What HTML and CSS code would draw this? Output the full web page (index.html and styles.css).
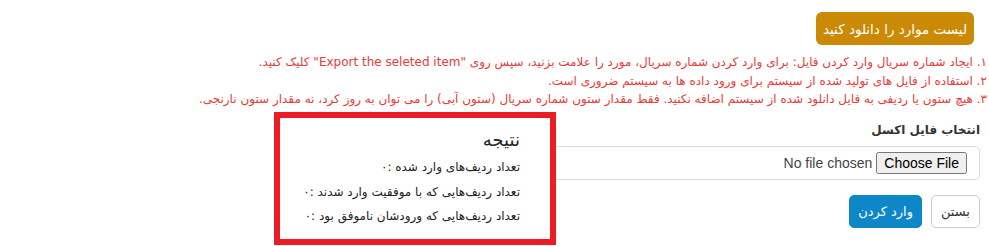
FILE: index.html
```html
<!DOCTYPE html>
<html lang="fa" dir="rtl">
<head>
    <meta charset="UTF-8">
    <meta name="viewport" content="width=device-width, initial-scale=1.0">
    <title>وارد کردن فایل اکسل</title>
    <link rel="stylesheet" href="styles.css">
</head>
<body>
    <div class="page">
        <div class="download-row">
            <button class="btn-download">لیست موارد را دانلود کنید</button>
        </div>

        <ul class="notes">
            <li>۱. ایجاد شماره سریال وارد کردن فایل: برای وارد کردن شماره سریال، مورد را علامت بزنید، سپس روی "Export the seleted item" کلیک کنید.</li>
            <li>۲. استفاده از فایل های تولید شده از سیستم برای ورود داده ها به سیستم ضروری است.</li>
            <li>۳. هیچ ستون یا ردیفی به فایل دانلود شده از سیستم اضافه نکنید. فقط مقدار ستون شماره سریال (ستون آبی) را می توان به روز کرد، نه مقدار ستون نارنجی.</li>
        </ul>

        <div class="import-form">
            <label class="form-label" for="excel-file">انتخاب فایل اکسل</label>
            <div class="file-box">
                <input type="file" id="excel-file">
            </div>
            <div class="actions">
                <button class="btn btn-close">بستن</button>
                <button class="btn btn-import">وارد کردن</button>
            </div>
        </div>

        <!-- نتیجه روی فرم نمایش داده می شود -->
        <div class="result-box">
            <h3>نتیجه</h3>
            <p>تعداد ردیف‌های وارد شده :۰</p>
            <p>تعداد ردیف‌هایی که با موفقیت وارد شدند :۰</p>
            <p>تعداد ردیف‌هایی که ورودشان ناموفق بود :۰</p>
        </div>
    </div>
</body>
</html>
```

FILE: styles.css
```css
* {
    margin: 0;
    padding: 0;
    box-sizing: border-box;
}

body {
    background-color: #fff;
    color: #222;
    font-family: "DejaVu Sans", "Liberation Sans", sans-serif;
    direction: rtl;
}

.page {
    position: relative;
    height: 246px;
    overflow: hidden;
    padding: 12px 2px 0 9px;
}

.download-row {
    padding-right: 13px;
}

.btn-download {
    background-color: #cb8a06;
    color: #fff;
    border: none;
    border-radius: 6px;
    height: 33px;
    padding: 0 7px;
    font-family: inherit;
    font-size: 13.5px;
}

.notes {
    list-style: none;
    margin-top: 8px;
    color: #ea3a3a;
    font-size: 12px;
    line-height: 18.5px;
}

.import-form {
    margin-top: 13px;
    padding-right: 7px;
}

.form-label {
    display: block;
    font-size: 12px;
    font-weight: bold;
    color: #333;
    height: 24px;
    line-height: 12px;
    padding-top: 2px;
}

.file-box {
    margin-left: 540px;
    height: 34px;
    border: 1px solid #dcdcdc;
    border-radius: 5px;
    padding: 5px 12px 0 0;
}

.file-box input {
    font-family: "Liberation Sans", sans-serif;
    font-size: 14px;
    color: #444;
}

.actions {
    display: flex;
    gap: 9px;
    margin-top: 15px;
}

.btn {
    height: 33px;
    border-radius: 5px;
    font-family: inherit;
    font-size: 13px;
    padding: 0 9px;
}

.btn-close {
    background-color: #fff;
    border: 1px solid #ccc;
    color: #333;
}

.btn-import {
    background-color: #0d87c8;
    border: 1px solid #0d87c8;
    color: #fff;
    padding: 0 8px;
}

.result-box {
    position: absolute;
    top: 112px;
    left: 274px;
    width: 282px;
    height: 133px;
    background-color: #fff;
    border: 6px solid #ec1c24;
    padding: 11px 30px 0 0;
    white-space: nowrap;
}

.result-box h3 {
    font-size: 18px;
    font-weight: normal;
    color: #222;
    margin-bottom: 5px;
}

.result-box p {
    font-size: 12px;
    line-height: 24.5px;
    color: #222;
}
```
